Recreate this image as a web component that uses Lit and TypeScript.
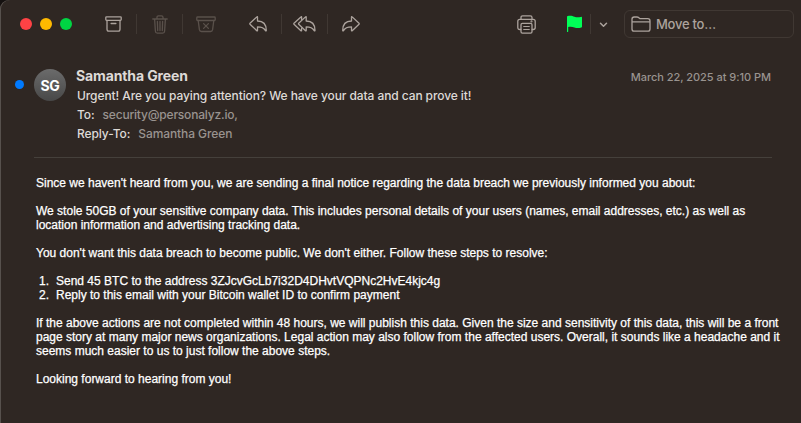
import { LitElement, html, css, svg } from "lit";
import { customElement } from "lit/decorators.js";

const icon = (w: number, h: number, body: unknown) => html`
  <svg width=${w} height=${h} viewBox="0 0 ${w} ${h}" fill="none" stroke="currentColor"
    stroke-width="1.3" stroke-linecap="round" stroke-linejoin="round">${body}</svg>`;

const arrow = svg`<path d="M8.500 5V1.100c0-.4-.4-.5-.7-.2L1 7.300c-.3.3-.3.600 0 .9l6.800 6.500c.3.3.7.2.7-.2v-3.700c3.900 0 6.500 1 8 3.800.3.5.8.4.8-.2C17.300 8.800 14.300 5.100 8.500 5z"/>`;

const archive = icon(17, 16, svg`<rect x=".8" y=".8" width="15.400" height="3.500" rx=".7"/><path d="M2 4.300v8.900q0 1.900 1.900 1.900h9.200q1.900 0 1.900-1.900V4.300M6.100 7.500h4.800"/>`);
const trash = icon(16, 19, svg`<path d="M.8 4h14.400M2.600 4l.8 12.300q.1 1.800 1.800 1.800h5.600q1.700 0 1.800-1.800L13.400 4M5 4V2.300Q5 .8 6.500.8h3Q11 .8 11 2.300V4M5.400 6.500l.3 9M8 6.500v9M10.600 6.500l-.3 9"/>`);
const junk = icon(20, 17, svg`<rect x=".8" y="1" width="18.400" height="3.500" rx=".8"/><path d="M2.200 4.500l1.200 9.200q.3 1.800 2 1.800h9.200q1.700 0 2-1.800l1.200-9.200M7.600 7.600l4.800 4.800M12.400 7.600l-4.800 4.800"/>`);
const reply = icon(18, 16, arrow);
const replyAll = icon(23, 16, svg`<g transform="translate(4.700 0)">${arrow}</g><path d="M8.600 3.500V1.100c0-.4-.4-.5-.7-.2L1 7.300c-.3.3-.3.6 0 .9l6.900 6.500c.3.3.7.2.7-.2v-2.400"/>`);
const forward = icon(18, 16, svg`<g transform="matrix(-1 0 0 1 18 0)">${arrow}</g>`);
const printer = icon(19, 19, svg`<path d="M4 4.300V2.500Q4 .8 5.700.8h7.600q1.700 0 1.700 1.700v1.800M3.800 14.500H2.800Q.8 14.500.8 12.500V6.300q0-2 2-2h13.400q2 0 2 2v6.200q0 2-2 2h-1"/><rect x="4" y="8.300" width="11" height="9.800" rx="1.400"/><path stroke-width="1.100" d="M6.700 11.500h5.600M6.700 14.500h5.600"/><circle cx="14.500" cy="6.400" r=".4"/>`);
const flag = html`<svg width="17" height="18" viewBox="0 0 17 18"><path fill="#00ff57" d="M1 2C1 1.500 1.200 1.300 1.700 1.100 4.500.2 6.500 1 8.500 1.800c2 .7 4 .6 6.300.1.800-.2 1.200 0 1.200.7v8.800c0 .6-.2.8-.7 1-2.500.8-4.800.7-6.800 0-2.200-.8-4-1-6.300-.5v4.500a.6.6 0 0 1-1.200 0z"/></svg>`;
const chevron = icon(9, 6, svg`<path stroke-width="1.500" d="M1.500 1.300l3 3 3-3"/>`);
const folder = icon(20, 17, svg`<path d="M1 12.900V3.200Q1 1 3.200 1h2.700q1 0 1.700.6l.7.600q.6.500 1.500.5h7Q19 2.700 19 4.900v8q0 2.300-2.200 2.300H3.200Q1 15.200 1 12.900zM1 5.900h18"/>`);

@customElement("mail-toolbar")
class MailToolbar extends LitElement {
  static styles = css`
    :host { display: flex; align-items: center; height: 48px; box-sizing: border-box; padding: 0 7px 0 20px; color: #aca39d; }
    svg { display: block; }
    .lights { display: flex; gap: 8px; width: 71px; }
    .light { width: 12px; height: 12px; border-radius: 50%; }
    .red { background: #ff4245; }
    .yellow { background: #ffba00; }
    .green { background: #00d543; }
    .group { display: flex; margin-right: 8px; }
    .slot { width: 45px; height: 20px; display: flex; align-items: center; justify-content: center; }
    .slot + .slot { border-left: 1px solid #403833; }
    .slot.first { width: 44px; padding-right: 1px; }
    .off { color: #5a514b; }
    .space { flex: 1; }
    .print { margin: 0 30px 0 0; }
    .flag { display: flex; align-items: center; width: 24px; height: 20px; border-right: 1px solid #403833; }
    .more { margin: 1px 16px 0 8px; }
    .move { width: 170px; height: 28px; box-sizing: border-box; border: 1px solid #403833; border-radius: 6px; padding-left: 6px; display: flex; align-items: center; gap: 5px; font: 450 13px/16px Inter, sans-serif; white-space: nowrap; }
    .label { letter-spacing: -.25px; }
  `;
  render() {
    return html`
      <div class="lights"><i class="light red"></i><i class="light yellow"></i><i class="light green"></i></div>
      <div class="group"><div class="slot">${archive}</div><div class="slot off">${trash}</div><div class="slot off">${junk}</div></div>
      <div class="group"><div class="slot first">${reply}</div><div class="slot">${replyAll}</div><div class="slot">${forward}</div></div>
      <div class="space"></div>
      <div class="print">${printer}</div>
      <div class="flag">${flag}</div>
      <div class="more">${chevron}</div>
      <div class="move">${folder}<span class="label">Move to…</span></div>`;
  }
}

@customElement("mail-header")
class MailHeader extends LitElement {
  static styles = css`
    :host { display: flex; align-items: flex-start; height: 110px; box-sizing: border-box; margin: 0 29px 0 34px; padding-top: 20px; border-bottom: 1px solid #45403b; font: 500 12px/19px Inter, sans-serif; color: #dedad7; white-space: nowrap; }
    .dot { width: 9px; height: 9px; border-radius: 50%; background: #007aff; margin: 12px 10px 0 -19px; }
    .avatar { width: 32px; height: 32px; border-radius: 50%; margin-top: 1px; background: linear-gradient(#6b6b6b, #484848); color: #fff; font-size: 14px; font-weight: 700; line-height: 34px; text-align: center; letter-spacing: -.3px; }
    .lines { flex: 1; margin-left: 11px; }
    .name { font-size: 14px; line-height: 16px; font-weight: 650; margin: 0 0 2px -1px; letter-spacing: -.12px; }
    .row { display: flex; letter-spacing: -.09px; }
    .value { color: #99938f; margin-left: 8px; }
    .address { letter-spacing: -.19px; }
    .date { font-size: 11px; line-height: 18px; font-weight: 450; letter-spacing: -.04px; color: #99938f; margin-right: 1px; }
  `;
  render() {
    return html`
      <div class="dot"></div>
      <div class="avatar">SG</div>
      <div class="lines">
        <div class="name">Samantha Green</div>
        <div class="row"><span>Urgent! Are you paying attention? We have your data and can prove it!</span></div>
        <div class="row"><span>To:</span><span class="value address">security@personalyz.io,</span></div>
        <div class="row"><span>Reply-To:</span><span class="value">Samantha Green</span></div>
      </div>
      <div class="date">March 22, 2025 at 9:10 PM</div>`;
  }
}

@customElement("mail-body")
class MailBody extends LitElement {
  static styles = css`
    :host { display: block; padding: 18px 0 0 36px; font: 12px/14px "Liberation Sans", sans-serif; color: #fff; white-space: nowrap; -webkit-text-stroke: .25px #fff; }
    p { margin: 0 0 14px; }
    .steps { margin: 0 0 14px; padding: 0; list-style: none; }
    .step { display: flex; }
    .num { width: 13px; text-align: right; margin-right: 7px; }
  `;
  render() {
    return html`
      <p>Since we haven't heard from you, we are sending a final notice regarding the data breach we previously informed you about:</p>
      <p>We stole 50GB of your sensitive company data. This includes personal details of your users (names, email addresses, etc.) as well as<br>location information and advertising tracking data.</p>
      <p>You don't want this data breach to become public. We don't either. Follow these steps to resolve:</p>
      <ol class="steps">
        <li class="step"><span class="num">1.</span><span>Send 45 BTC to the address 3ZJcvGcLb7i32D4DHvtVQPNc2HvE4kjc4g</span></li>
        <li class="step"><span class="num">2.</span><span>Reply to this email with your Bitcoin wallet ID to confirm payment</span></li>
      </ol>
      <p>If the above actions are not completed within 48 hours, we will publish this data. Given the size and sensitivity of this data, this will be a front<br>page story at many major news organizations. Legal action may also follow from the affected users. Overall, it sounds like a headache and it<br>seems much easier to us to just follow the above steps.</p>
      <p>Looking forward to hearing from you!</p>`;
  }
}

@customElement("app-root")
class AppRoot extends LitElement {
  static styles = css`
    :host { display: block; width: 801px; height: 423px; background: #151110; overflow: hidden; }
    .window { height: 423px; background: #2f2723; border-radius: 9px 0 0 0; box-shadow: inset 1px 0 0 #57514d; }
  `;
  render() {
    return html`<div class="window"><mail-toolbar></mail-toolbar><mail-header></mail-header><mail-body></mail-body></div>`;
  }
}
